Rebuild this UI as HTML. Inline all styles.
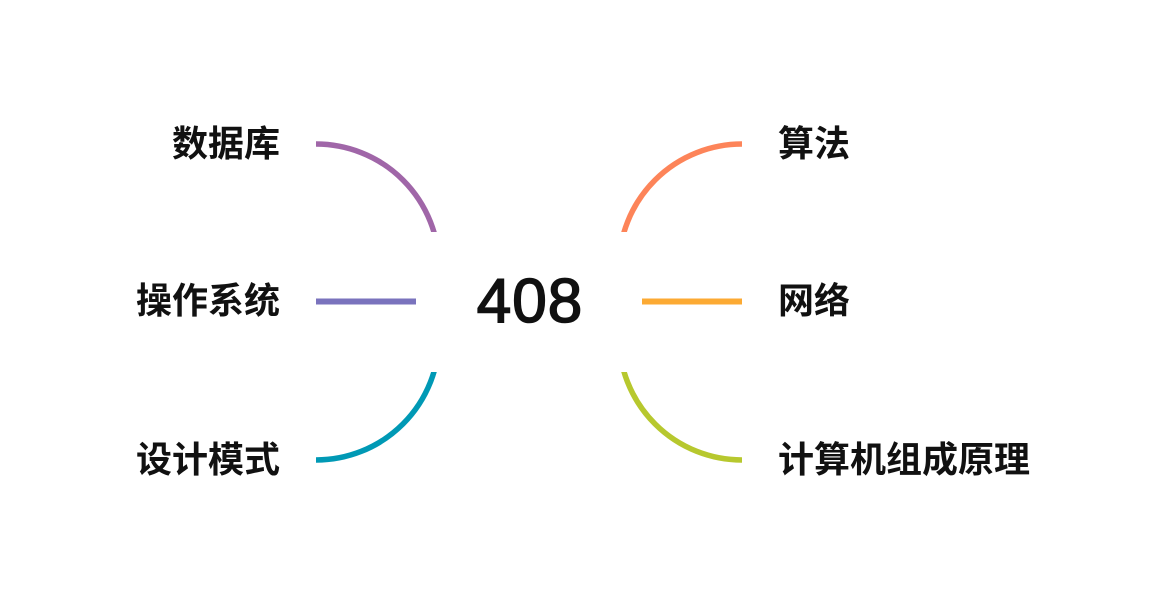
<!DOCTYPE html>
<html><head><meta charset="utf-8"><style>
html,body{margin:0;padding:0;background:#fff;}
body{width:1166px;height:604px;position:relative;overflow:hidden;font-family:"Liberation Sans","Noto Sans CJK SC",sans-serif;}
.l{position:absolute;font-size:36px;font-weight:bold;color:#111;line-height:40px;white-space:nowrap;}
.r{text-align:right;right:886px;}
.lf{left:778px;}
.n{position:absolute;left:430px;width:200px;text-align:center;top:267px;font-size:62px;line-height:70px;color:#111;font-family:"Liberation Sans",sans-serif;font-weight:normal;-webkit-text-stroke:1.6px #111;letter-spacing:1px;}
</style></head><body>
<svg width="1166" height="604" style="position:absolute;left:0;top:0">
<defs>
<clipPath id="ct"><rect x="0" y="0" width="1166" height="232"/></clipPath>
<clipPath id="cb"><rect x="0" y="372" width="1166" height="300"/></clipPath>
</defs>
<g fill="none" stroke-width="5.5">
<circle cx="316" cy="267" r="123" stroke="#a066a8" clip-path="url(#ct)"/>
<circle cx="742" cy="267" r="123" stroke="#fd8459" clip-path="url(#ct)"/>
<circle cx="316" cy="337" r="123" stroke="#0099b5" clip-path="url(#cb)"/>
<circle cx="742" cy="337" r="123" stroke="#b7c82e" clip-path="url(#cb)"/>
<line x1="316" y1="301.5" x2="416" y2="301.5" stroke="#7a73bd" stroke-width="6"/>
<line x1="642" y1="301.5" x2="742" y2="301.5" stroke="#fcaa33" stroke-width="6"/>
</g>
<rect x="160" y="140" width="156" height="330" fill="#fff"/>
<rect x="742" y="140" width="200" height="330" fill="#fff"/>
</svg>
<div class="l r" style="top:124px">数据库</div>
<div class="l r" style="top:281px">操作系统</div>
<div class="l r" style="top:440px">设计模式</div>
<div class="l lf" style="top:124px">算法</div>
<div class="l lf" style="top:281px">网络</div>
<div class="l lf" style="top:440px">计算机组成原理</div>
<div class="n">408</div>
</body></html>
